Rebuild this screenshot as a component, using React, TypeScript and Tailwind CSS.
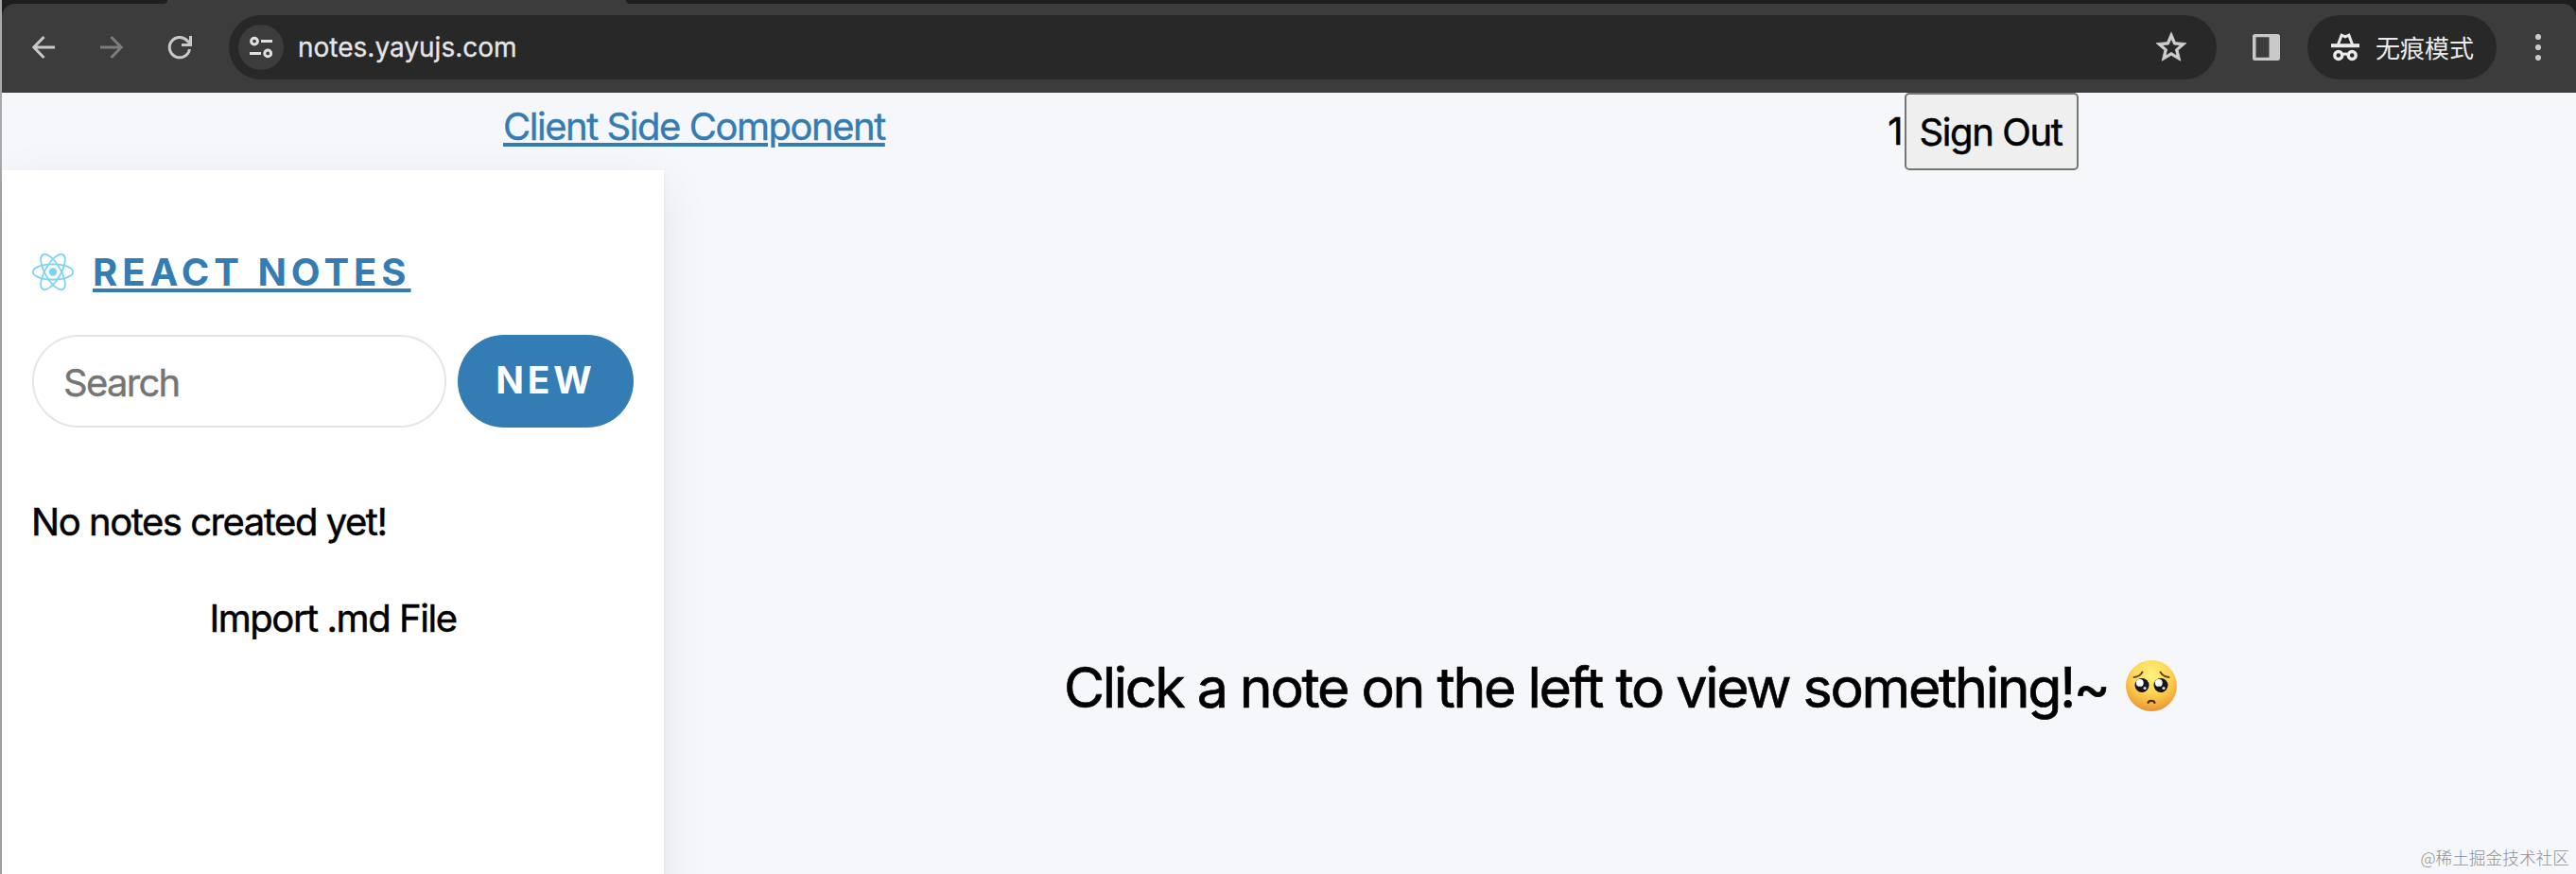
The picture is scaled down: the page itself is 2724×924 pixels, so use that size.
import React from 'react';

function BackIcon() {
  return (
    <svg className="h-7 w-7 text-[#c9c9c9]" viewBox="0 0 28 28" fill="none" stroke="currentColor" strokeWidth="3">
      <path d="M26 14H4M14.5 3L3.8 14l10.7 11" />
    </svg>
  );
}

function ForwardIcon() {
  return (
    <svg className="h-7 w-7 text-[#7d7d7d]" viewBox="0 0 28 28" fill="none" stroke="currentColor" strokeWidth="3">
      <path d="M2 14h22M13.500 3l10.700 11-10.700 11" />
    </svg>
  );
}

function ReloadIcon() {
  return (
    <svg className="h-7 w-7 text-[#c9c9c9]" viewBox="0 0 28 28" fill="none" stroke="currentColor" strokeWidth="3">
      <path d="M24.500 16A10.700 10.700 0 1 1 21.600 6.600L25 10" />
      <path d="M25.500 2v9.500H16" />
    </svg>
  );
}

function SiteInfoIcon() {
  return (
    <svg className="h-7 w-7 text-[#e0e0e0]" viewBox="0 0 28 28" fill="none" stroke="currentColor" strokeWidth="3">
      <circle cx="7" cy="7.600" r="3.400" />
      <path d="M14 7.600h12M2 20.400h12" />
      <circle cx="21.200" cy="20.400" r="3.400" />
    </svg>
  );
}

function StarIcon() {
  return (
    <svg className="h-[38px] w-[38px] text-[#cfcfcf]" viewBox="0 0 24 24" fill="currentColor" stroke="currentColor" strokeWidth="0.5">
      <path d="M22 9.240l-7.190-.620L12 2 9.190 8.630 2 9.240l5.460 4.730L5.820 21 12 17.270 18.180 21l-1.630-7.030L22 9.240zM12 15.400l-3.760 2.270 1-4.280-3.320-2.880 4.380-.380L12 6.100l1.710 4.040 4.380.380-3.320 2.880 1 4.280L12 15.400z" />
    </svg>
  );
}

function SidePanelIcon() {
  return (
    <svg className="h-7 w-[29px] text-[#c9c9c9]" viewBox="0 0 29 28">
      <path fill="currentColor" fillRule="evenodd" d="M2.500 0h24A2.500 2.500 0 0 1 29 2.500v23a2.500 2.500 0 0 1-2.500 2.500h-24A2.500 2.500 0 0 1 0 25.500v-23A2.500 2.500 0 0 1 2.500 0zM3.500 3.200v21.600h14V3.200z" />
    </svg>
  );
}

function IncognitoIcon() {
  return (
    <svg className="h-[30px] w-[30px] text-[#ebebeb]" viewBox="0 0 30 30" fill="none" stroke="currentColor">
      <path strokeWidth="4" d="M0 13.200h30" />
      <path strokeWidth="3" d="M7.500 12l3.600-9.800 3.900 1.600 3.900-1.600 3.600 9.800" />
      <circle cx="7.800" cy="23.500" r="4" strokeWidth="3.400" />
      <circle cx="22.200" cy="23.500" r="4" strokeWidth="3.400" />
      <path strokeWidth="3" d="M11.500 22.800q3.500-1.800 7 0" />
    </svg>
  );
}

function MenuDots() {
  return (
    <svg className="h-7 w-2 text-[#c9c9c9]" viewBox="0 0 8 28" fill="currentColor">
      <circle cx="4" cy="3" r="3.100" />
      <circle cx="4" cy="14" r="3.100" />
      <circle cx="4" cy="25" r="3.100" />
    </svg>
  );
}

function ReactLogo() {
  return (
    <svg className="h-[42px] w-[46px] shrink-0" viewBox="-22 -20.500 46 42" fill="none" stroke="#7dd3f2" strokeWidth="1.800">
      <circle r="4.200" fill="#7dd3f2" stroke="none" />
      <ellipse rx="21.200" ry="8.200" />
      <ellipse rx="21.200" ry="8.200" transform="rotate(60)" />
      <ellipse rx="21.200" ry="8.200" transform="rotate(120)" />
    </svg>
  );
}

function PleadingFace() {
  return (
    <svg className="h-[54px] w-[54px] shrink-0" viewBox="0 0 54 54" role="img" aria-label="🥺">
      <defs>
        <radialGradient id="face" cx="0.5" cy="0.28" r="0.72">
          <stop offset="0" stopColor="#fff27e" />
          <stop offset="0.5" stopColor="#fdd656" />
          <stop offset="0.85" stopColor="#f3ab3a" />
          <stop offset="1" stopColor="#e5923a" />
        </radialGradient>
      </defs>
      <circle cx="27" cy="27" r="27" fill="url(#face)" />
      <path d="M8.500 18q6.500-.800 9-5.500M45.500 18q-6.500-.800-9-5.500" fill="none" stroke="#6b3d0a" strokeWidth="1.900" strokeLinecap="round" />
      <circle cx="17" cy="26.500" r="7.500" fill="#17151c" />
      <circle cx="37" cy="26.500" r="7.500" fill="#17151c" />
      <circle cx="14.800" cy="23.900" r="3.900" fill="#fff" />
      <circle cx="34.800" cy="23.900" r="3.900" fill="#fff" />
      <circle cx="20" cy="29.500" r="1.600" fill="#dcd8e2" />
      <circle cx="40" cy="29.500" r="1.600" fill="#dcd8e2" />
      <path d="M23.500 45q.500-2.200 3.500-2.200t3.500 2.200" fill="none" stroke="#4d2a08" strokeWidth="2.200" strokeLinecap="round" />
    </svg>
  );
}

function BrowserToolbar() {
  return (
    <div className="h-[98px] shrink-0 bg-[#1e1e1e]">
      <div className="flex h-1 justify-between bg-[#3c3c3c]">
        <div className="w-[175px] rounded-br-[4px] bg-[#1e1e1e]" />
        <div className="w-[2062px] rounded-bl-[4px] bg-[#1e1e1e]" />
      </div>
      <div className="flex h-[94px] items-center rounded-t-[14px] bg-[#3c3c3c] pb-0.5 pl-[30px] pr-[34px]">
        <BackIcon />
        <div className="ml-11"><ForwardIcon /></div>
        <div className="ml-11"><ReloadIcon /></div>
        <div className="ml-[38px] flex h-[68px] w-[2102px] items-center rounded-full bg-[#282828] pl-2.5 pr-[29px]">
          <div className="flex h-12 w-12 items-center justify-center rounded-full bg-[#3c3c3c]">
            <SiteInfoIcon />
          </div>
          <span className="ml-[15px] flex-1 text-[28px] leading-[40px] text-[#e6e6e6] [-webkit-text-stroke:0.3px]">notes.yayujs.com</span>
          <StarIcon />
        </div>
        <div className="ml-[38px]"><SidePanelIcon /></div>
        <div className="ml-[29px] flex h-[68px] w-[200px] items-center rounded-full bg-[#282828] pl-[25px]">
          <IncognitoIcon />
          <span className="ml-[17px] whitespace-nowrap pb-px font-['Noto_Sans_CJK_SC',sans-serif] text-[26px] leading-[40px] text-[#ebebeb]">无痕模式</span>
        </div>
        <div className="ml-10"><MenuDots /></div>
      </div>
    </div>
  );
}

function Header() {
  return (
    <header className="flex h-[82px] shrink-0 items-start pl-[530px]">
      <a className="w-[404px] whitespace-nowrap text-[40px] leading-[72px] tracking-[-1.47px] text-[#347cb4] underline decoration-[4px] underline-offset-[3px] [-webkit-text-stroke:0.4px]">
        Client Side Component
      </a>
      <div className="ml-[1058px] flex items-center [-webkit-text-stroke:0.5px]">
        <span className="w-5 whitespace-nowrap pr-[3px] text-right text-[40px] leading-[82px] tracking-[-1.4px]">1</span>
        <button className="h-[82px] w-[184px] whitespace-nowrap rounded-[5px] border-2 border-[#767676] bg-[#efefef] pr-0.5 pt-0.5 text-[40px] leading-[76px] tracking-[-1.4px]">
          Sign Out
        </button>
      </div>
    </header>
  );
}

function Sidebar() {
  return (
    <section className="h-[1000px] w-[700px] shrink-0 bg-white px-8 pt-[78px] shadow-[0_16px_48px_rgba(0,0,0,0.08),0_4px_4px_rgba(0,0,0,0.08)]">
      <div className="flex h-[60px] items-center">
        <ReactLogo />
        <a className="ml-[18px] whitespace-nowrap text-[40px] font-bold leading-[60px] tracking-[4.98px] text-[#347cb4] underline decoration-[4px] underline-offset-[3px]">
          REACT NOTES
        </a>
      </div>
      <div className="mt-[36px] flex h-[98px] justify-between">
        <div className="w-[438px] rounded-full border-2 border-[#e6e6e8] pl-[31px] pt-0.5 text-[40px] leading-[94px] tracking-[-1.7px] text-[#757575] [-webkit-text-stroke:0.4px]">
          Search
        </div>
        <button className="w-[186px] rounded-full bg-[#347cb4] pb-0.5 text-[39px] font-bold leading-[96px] tracking-[3.8px] text-white">
          NEW
        </button>
      </div>
      <p className="-ml-px mt-[70px] whitespace-nowrap text-[40px] leading-[60px] tracking-[-1.46px] [-webkit-text-stroke:0.5px]">No notes created yet!</p>
      <p className="mt-[42px] text-center text-[40px] leading-[60px] tracking-[-1.45px] [-webkit-text-stroke:0.5px]">Import .md File</p>
    </section>
  );
}

export default function App() {
  return (
    <div className="flex h-[924px] w-[2724px] overflow-hidden bg-[#f6f7fb] font-['Inter','Noto_Sans_CJK_SC',sans-serif] text-black">
      <div className="w-0.5 shrink-0 bg-[#a9a9ab]" />
      <div className="relative flex min-w-0 flex-1 flex-col">
        <BrowserToolbar />
        <Header />
        <main className="flex min-h-0 flex-1">
          <Sidebar />
          <section className="flex h-[1000px] flex-1 items-start pl-[423px] pt-[501px]">
            <p className="h-[90px] w-[1105px] whitespace-nowrap pt-px text-[59px] leading-[90px] tracking-[-2.28px] [-webkit-text-stroke:0.7px]">
              Click a note on the left to view something!~
            </p>
            <div className="ml-[18px] pt-[17px]"><PleadingFace /></div>
          </section>
        </main>
        <span className="absolute bottom-[5px] right-[7px] whitespace-nowrap font-['Noto_Sans_CJK_SC',sans-serif] text-[17.700px] font-light leading-[26px] text-[#8f9093]">
          @稀土掘金技术社区
        </span>
      </div>
    </div>
  );
}
